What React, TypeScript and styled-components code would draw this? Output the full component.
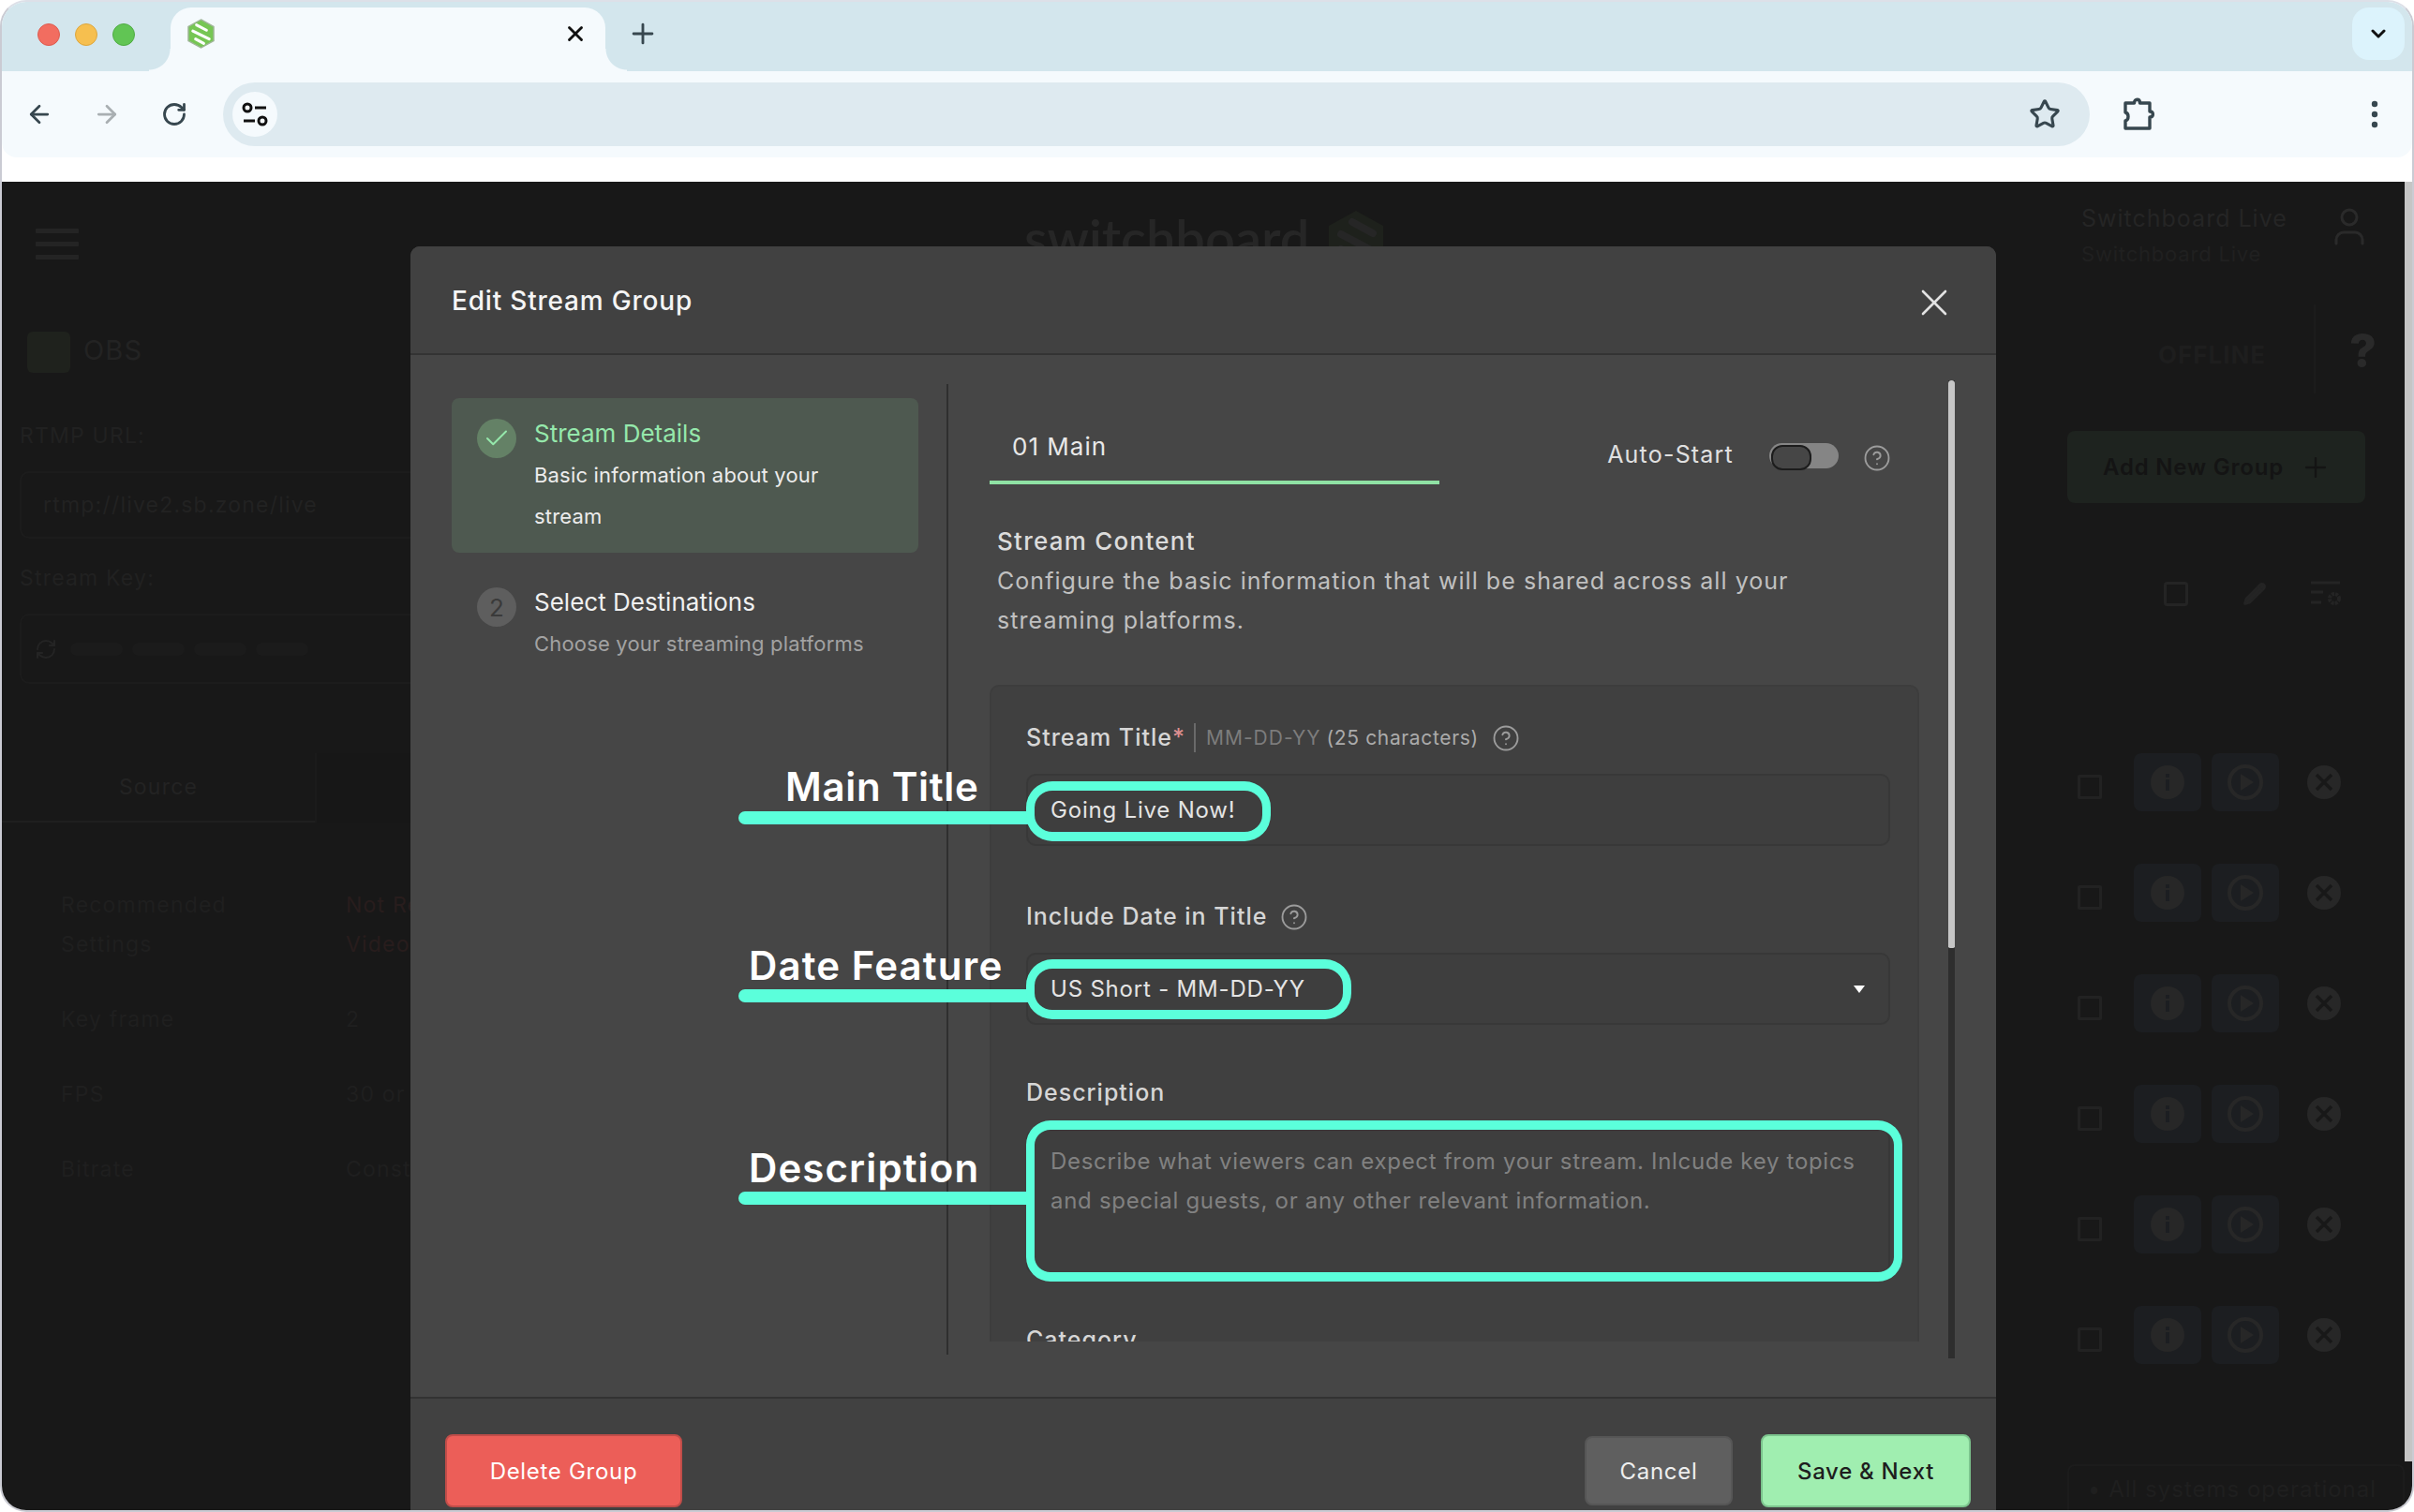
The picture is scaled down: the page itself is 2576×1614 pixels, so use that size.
import React from "react";
import styled, { createGlobalStyle } from "styled-components";
import { ArrowLeft, ArrowRight, RotateCw, Star, X, Plus, ChevronDown, CircleHelp, Check, User, Pencil, RefreshCw } from "lucide-react";

const Global = createGlobalStyle`
  html, body { margin: 0; padding: 0; background: #fff; }
  body { font-family: Inter, "Liberation Sans", sans-serif; }
  * { box-sizing: border-box; }
`;

const Window = styled.div`
  width: 2576px; height: 1614px; display: flex; flex-direction: column; overflow: hidden;
  background: #fff; border: 2px solid #cacbd3; border-top-color: #dde0e8; border-radius: 28px;
`;
const TabStrip = styled.div`
  height: 74px; flex: none; display: flex; background: #d3e6ed; padding: 6px 8px 0 38px;
`;
const Lights = styled.div`
  display: flex; gap: 16px; height: 56px; align-items: center; padding-top: 1px; margin-right: 38px;
`;
const Light = styled.span<{ $c: string; $b: string }>`
  width: 24px; height: 24px; border-radius: 50%; background: ${p => p.$c}; border: 1px solid ${p => p.$b};
`;
const Tab = styled.div`
  position: relative; width: 464px; height: 68px; background: #f5fafd; border-radius: 22px 22px 0 0;
  display: flex; align-items: flex-start; padding: 12px 19px 0 18px; justify-content: space-between;
  &::before, &::after { content: ""; position: absolute; bottom: 0; width: 23px; height: 24px; }
  &::before { left: -23px; background: radial-gradient(circle at 0 0, transparent 22px, #f5fafd 23px); }
  &::after { right: -23px; background: radial-gradient(circle at 100% 0, transparent 22px, #f5fafd 23px); }
`;
const TabClose = styled.span`
  display: flex; color: #111; margin-top: 3px;
`;
const NewTab = styled.span`
  display: flex; color: #37474f; margin: 11px 0 0 23px; height: 34px;
`;
const TabMenu = styled.span`
  margin-left: auto; width: 56px; height: 56px; border-radius: 18px; background: #dcf3fc; color: #111;
  display: flex; align-items: center; justify-content: center;
`;
const Toolbar = styled.div`
  height: 92px; flex: none; display: flex; align-items: center; padding: 0 4px;
  background: #f5fafd; border-radius: 0 0 16px 16px;
`;
const ToolSlot = styled.span<{ $c?: string }>`
  width: 72px; height: 72px; flex: none; display: flex; align-items: center; justify-content: center;
  color: ${p => p.$c || "#37474f"};
`;
const Omnibox = styled.div`
  width: 1992px; height: 68px; flex: none; margin: 0 16px; border-radius: 34px; background: #deeaf0;
  display: flex; align-items: center; justify-content: space-between; padding: 0 31px 0 10px; color: #37474f;
`;
const SiteChip = styled.span`
  width: 48px; height: 48px; border-radius: 50%; background: #f5fafd; display: flex; align-items: center; justify-content: center;
`;
const ToolbarEnd = styled.span`
  margin-left: auto; display: flex;
`;
const ChromeGap = styled.div`
  height: 26px; flex: none; background: #fff;
`;

const Stage = styled.div`
  position: relative; flex: 1; min-height: 0; background: #181818; display: flex; align-items: flex-start;
`;
const PageScrollbar = styled.div`
  width: 8px; height: 1366px; flex: none; background: #c5c5c5;
`;
const Backdrop = styled.div`
  flex: 1; min-width: 0; height: 100%; display: flex; flex-direction: column; overflow: hidden; font-size: 23px; letter-spacing: 1.2px;
`;
const AppHeader = styled.div`
  height: 126px; flex: none; display: flex; padding-left: 36px;
`;
const Hamburger = styled.div`
  display: flex; flex-direction: column; gap: 9px; width: 46px; margin-top: 50px;
  span { height: 5px; background: #242424; border-radius: 1px; }
`;
const LogoWord = styled.div`
  margin: 24px 0 0 1009px; font: 600 56px/72px Lato, sans-serif; color: #262626; width: 310px; letter-spacing: 0;
`;
const LogoMark = styled.div`
  margin: 30px 0 0 14px;
`;
const Account = styled.div`
  margin: 20px 0 0 744px; width: 214px; flex: none; color: #252525; font-size: 25px; line-height: 38px; letter-spacing: 1px; white-space: nowrap;
`;
const AccountSub = styled.div`
  font-size: 22px; line-height: 38px; letter-spacing: 0.8px; color: #202020;
`;
const UserSlot = styled.div`
  color: #2a2a2a; margin: 24px 0 0 48px;
`;
const AppColumns = styled.div`
  flex: 1; min-height: 0; display: flex; justify-content: space-between;
`;
const LeftPane = styled.div`
  width: 560px; flex: none; color: #202020; white-space: nowrap;
`;
const ObsRow = styled.div`
  display: flex; align-items: center; gap: 14px; margin: 34px 0 0 27px; font-size: 29px; color: #232323;
`;
const ObsIcon = styled.span`
  width: 46px; height: 44px; border-radius: 6px; background: #1f221d;
`;
const ObsName = styled.span`
  margin-top: -6px;
`;
const PaneLabel = styled.div<{ $mt: number }>`
  margin: ${p => p.$mt}px 0 0 19px; line-height: 34px; color: #212121;
`;
const PaneInput = styled.div<{ $h: number; $pl: number }>`
  margin: 21px 0 0 19px; height: ${p => p.$h}px; border: 2px solid #1c1c1c; border-radius: 10px; color: #222;
  display: flex; align-items: center; padding-left: ${p => p.$pl}px; gap: 14px;
`;
const KeyMask = styled.span`
  display: flex; gap: 10px; width: 254px;
  i { flex: 1; height: 14px; border-radius: 7px; background: #1b1b1b; }
`;
const PaneTabs = styled.div`
  display: flex; height: 74px; margin-top: 74px;
`;
const PaneTab = styled.div`
  width: 334px; border-bottom: 2px solid #1f1f1f; display: flex; align-items: center; justify-content: center; color: #232323;
`;
const PaneTabIdle = styled.div`
  flex: 1; background: #171717; border-left: 2px solid #1b1b1b;
`;
const SpecGrid = styled.div`
  display: grid; grid-template-columns: 304px 1fr; row-gap: 38px; margin: 67px 0 0 63px; line-height: 42px; color: #1f1f1f;
`;
const SpecDanger = styled.div`
  color: #281d1d;
`;
const RightPane = styled.div`
  width: 360px; flex: none;
`;
const StatusRow = styled.div`
  display: flex; align-items: center; height: 95px; margin-top: 5px; padding-left: 97px;
`;
const Offline = styled.span`
  width: 115px; margin-top: 12px; font-size: 26px; font-weight: 700; color: #1e1e1e; letter-spacing: 1px;
`;
const StatusRule = styled.span`
  width: 2px; height: 95px; background: #1c1c1c; margin: 0 36px 0 51px;
`;
const HelpGlyph = styled.span`
  font-size: 50px; font-weight: 800; color: #2a2a2a; margin-top: 2px; letter-spacing: 0;
`;
const AddButton = styled.div`
  margin-top: 40px; width: 318px; height: 77px; border-radius: 8px; background: #1e231f; color: #141414; font-weight: 600; white-space: nowrap;
  display: flex; align-items: center; justify-content: space-between; padding: 0 36px 0 38px; font-size: 24px; letter-spacing: 0.8px;
`;
const TableTools = styled.div`
  display: flex; align-items: center; margin-top: 84px; height: 26px; padding-left: 103px; gap: 46px; color: #242424;
`;
const ToolSquare = styled.span`
  display: flex; margin-right: 12px;
`;
const StreamRow = styled.div<{ $first?: boolean }>`
  display: flex; align-items: center; height: 62px; margin-top: ${p => (p.$first ? 157 : 56)}px; padding-left: 11px;
`;
const RowCheck = styled.span`
  width: 26px; height: 26px; border: 3px solid #222; border-radius: 2px; margin: 10px 34px 0 0; flex: none;
`;
const RowAction = styled.span`
  width: 72px; height: 62px; border-radius: 8px; background: #1c1e21; margin-right: 11px; display: flex; align-items: center; justify-content: center;
`;
const RowRemove = styled.span`
  display: flex; margin-left: 18px;
`;
const SystemStatus = styled.div`
  margin-top: 107px; height: 60px; border: 2px solid #1c1c1c; border-bottom: 0; border-radius: 8px 8px 0 0;
  padding: 10px 0 0 22px; font-size: 24px; color: #1f1f1f; letter-spacing: 1px; white-space: nowrap;
  &::before { content: "●"; font-size: 10px; margin-right: 10px; vertical-align: middle; }
`;

const Modal = styled.div`
  position: absolute; left: 436px; top: 69px; width: 1692px; height: 1349px; display: flex; flex-direction: column;
  background: #464646; border-radius: 10px 10px 0 0; overflow: hidden; color: #eee;
`;
const ModalHeader = styled.div`
  height: 116px; flex: none; background: #414141; border-bottom: 2px solid #333;
  display: flex; align-items: center; justify-content: space-between; padding: 0 42px 0 44px;
`;
const ModalTitle = styled.h2`
  margin: 1px 0 0; font-size: 28px; font-weight: 500; letter-spacing: 0.8px; color: #f5f5f5;
`;
const CloseSlot = styled.span`
  display: flex; color: #e2e2e2; margin-top: 5px;
`;
const ModalBody = styled.div`
  flex: 1; min-height: 0; display: flex; padding: 31px 0 45px 44px;
`;
const Sidebar = styled.div`
  width: 530px; flex: none; border-right: 2px solid #2f2f2f; padding: 15px 30px 0 0;
  display: flex; flex-direction: column; gap: 15px;
`;
const Step = styled.div<{ $active?: boolean }>`
  display: flex; gap: 19px; padding: 20px 27px 17px; border-radius: 8px; background: ${p => (p.$active ? "#4e5950" : "transparent")};
`;
const StepBadge = styled.span<{ $active?: boolean }>`
  width: 42px; height: 42px; margin-top: 2px; flex: none; border-radius: 50%; background: ${p => (p.$active ? "#648166" : "#5e5e5e")};
  color: ${p => (p.$active ? "#95e8ab" : "#3a3a3a")}; display: flex; align-items: center; justify-content: center; font-size: 26px;
`;
const StepText = styled.div`
  min-width: 0;
`;
const StepTitle = styled.div<{ $active?: boolean }>`
  font-size: 26px; line-height: 36px; color: ${p => (p.$active ? "#95e8ab" : "#f0f0f0")};
`;
const StepDesc = styled.div<{ $muted?: boolean }>`
  margin-top: 4px; max-width: 360px; font-size: 22px; line-height: 44px; letter-spacing: 0.18px; color: ${p => (p.$muted ? "#a2a2a2" : "#ececec")};
`;
const MainColumn = styled.div`
  flex: 1; min-width: 0; display: flex;
`;
const ScrollContent = styled.div`
  width: 1067px; flex: none; padding: 0 31px 0 44px; margin-bottom: 14px; overflow: hidden;
`;
const TabRow = styled.div`
  display: flex; justify-content: space-between; padding-right: 30px;
`;
const GroupTab = styled.div`
  width: 480px; height: 107px; border-bottom: 4px solid #8fe2a4; padding: 50px 0 0 24px; font-size: 26px; line-height: 34px; letter-spacing: 1px; color: #e8e8e8;
`;
const AutoStart = styled.div`
  display: flex; align-items: center; gap: 38px; height: 34px; margin-top: 58px; font-size: 25px; letter-spacing: 1.2px; color: #e0e0e0;
`;
const Toggle = styled.span`
  width: 74px; height: 27px; border-radius: 14px; background: #858585; margin-top: 3px; padding: 2px; display: flex;
  &::before { content: ""; width: 39px; height: 23px; border-radius: 12px; background: #464646; border: 2px solid #1c1c1c; }
`;
const HelpSlot = styled.span<{ $ml?: number; $mt?: number }>`
  display: flex; color: #9c9c9c; margin-left: ${p => p.$ml ?? 0}px; margin-top: ${p => p.$mt ?? 0}px;
`;
const AutoHelp = styled(HelpSlot)`
  margin-left: -12px;
`;
const SectionHead = styled.div`
  margin: 40px 0 0 8px;
`;
const SectionTitle = styled.div`
  font-size: 26px; font-weight: 500; line-height: 42px; letter-spacing: 1.25px; color: #dcdcdc;
`;
const SectionText = styled.div`
  font-size: 25px; line-height: 42px; letter-spacing: 1.05px; color: #c0c0c0; width: 900px;
`;
const FormCard = styled.div`
  margin-top: 48px; padding: 37px 29px 0 37px; min-height: 760px; border: 2px solid #3d3d3d; border-radius: 10px; background: #404040;
`;
const FieldLabel = styled.div<{ $mt?: number }>`
  display: flex; align-items: center; height: 34px; margin-top: ${p => p.$mt ?? 0}px; font-size: 25px; font-weight: 500; letter-spacing: 1px; color: #d6d6d6;
`;
const Required = styled.span`
  color: #dc8f8f;
`;
const LabelRule = styled.span`
  width: 2px; height: 31px; background: #6a6a6a; margin: 0 11px 0 9px;
`;
const LabelFormat = styled.span`
  font-size: 21px; color: #7c7c7c; margin-right: 6px; font-weight: 400;
`;
const LabelHint = styled.span`
  font-size: 21px; color: #ababab; font-weight: 400; letter-spacing: 0.65px;
`;
const FieldBox = styled.div<{ $h: number }>`
  margin-top: 22px; height: ${p => p.$h}px; border: 2px solid #383838; border-radius: 10px; background: #3e3e3e; padding: 0 25px 0 24px;
  display: flex; align-items: center; justify-content: space-between; font-size: 24px; letter-spacing: 0.8px; color: #e4e4e4;
`;
const Caret = styled.span`
  width: 0; height: 0; border-left: 6px solid transparent; border-right: 6px solid transparent; border-top: 8px solid #fff;
`;
const Placeholder = styled.div`
  align-self: flex-start; padding-top: 12px; line-height: 42px; letter-spacing: 0.7px; color: #818181;
`;
const Scrollbar = styled.div`
  width: 7px; flex: none; margin: -4px 0 -4px; background: #2e2e2e;
  &::before { content: ""; display: block; height: 606px; background: #c6c6c6; border-radius: 4px 4px 2px 2px; }
`;
const ModalFooter = styled.div`
  height: 121px; flex: none; background: #414141; border-top: 2px solid #333; display: flex; align-items: flex-start; padding: 38px 27px 0 37px; justify-content: space-between;
`;
const FooterGroup = styled.div`
  display: flex; align-items: center; gap: 30px;
`;
const FooterButton = styled.button<{ $bg: string; $bd: string; $fg: string; $w: number; $h: number; $weight?: number }>`
  width: ${p => p.$w}px; height: ${p => p.$h}px; border-radius: 8px; border: 2px solid ${p => p.$bd}; background: ${p => p.$bg}; color: ${p => p.$fg};
  font: ${p => p.$weight ?? 400} 24px Inter, sans-serif; letter-spacing: 0.7px;
`;
const CalloutRing = styled.div<{ $x: number; $y: number; $w: number; $h: number; $r: number }>`
  position: absolute; left: ${p => p.$x}px; top: ${p => p.$y}px; width: ${p => p.$w}px; height: ${p => p.$h}px;
  border: 10px solid #5bffdb; border-left-width: 9px; border-right-width: 9px; border-radius: ${p => p.$r}px;
`;
const CalloutLine = styled.div<{ $y: number }>`
  position: absolute; left: 350px; top: ${p => p.$y}px; width: 312px; height: 14px; border-radius: 7px 0 0 7px; background: #5bffdb;
`;
const CalloutLabel = styled.div<{ $x: number; $y: number; $ls?: number }>`
  position: absolute; left: ${p => p.$x}px; top: ${p => p.$y}px; font-size: 42px; line-height: 48px; font-weight: 600; letter-spacing: ${p => p.$ls ?? 1.1}px; color: #fff; white-space: nowrap;
`;

const Favicon = () => (
  <svg width="29" height="32" viewBox="0 0 30 34" fill="none" preserveAspectRatio="none">
    <path d="M15 1 29 9v16l-14 8-14-8V9z" fill="#76c654" stroke="#9fb598" strokeWidth="1.5" />
    <path d="M10 7l11 6M6 14l18 9M9 23l9 5" stroke="#fff" strokeWidth="3.2" strokeLinecap="round" />
  </svg>
);
const SiteIcon = () => (
  <svg width="28" height="26" viewBox="0 0 28 26" fill="none" stroke="#111" strokeWidth="3">
    <circle cx="6" cy="6" r="4" />
    <path d="M14 6h12M2 20h12" />
    <circle cx="22" cy="20" r="4" />
  </svg>
);
const PuzzleIcon = () => (
  <svg width="36" height="36" viewBox="0 0 36 36" fill="none" stroke="#37474f" strokeWidth="3.4" strokeLinejoin="round">
    <path d="M4 6h9.5c0-5 6-5 6 0H30v9c4.5 0 4.5 6 0 6v12H4v-8c4-1 4-8 0-9z" />
  </svg>
);
const KebabIcon = () => (
  <svg width="8" height="30" viewBox="0 0 8 30" fill="#37474f">
    <circle cx="4" cy="4" r="3.2" />
    <circle cx="4" cy="15" r="3.2" />
    <circle cx="4" cy="26" r="3.2" />
  </svg>
);
const LogoHex = () => (
  <svg width="60" height="68" viewBox="0 0 60 68" fill="none">
    <path d="M30 1 59 17v34L30 67 1 51V17z" fill="#1e211c" />
    <path d="M26 13l22 12M14 26l34 18M14 42l20 11" stroke="#262626" strokeWidth="8" strokeLinecap="round" />
  </svg>
);
const InfoIcon = () => (
  <svg width="38" height="38" viewBox="0 0 38 38">
    <circle cx="19" cy="19" r="18" fill="#272727" />
    <rect x="17" y="16" width="4" height="12" fill="#1c1e21" />
    <rect x="17" y="10" width="4" height="4" fill="#1c1e21" />
  </svg>
);
const PlayIcon = () => (
  <svg width="38" height="38" viewBox="0 0 38 38" fill="none">
    <circle cx="19" cy="19" r="17" stroke="#272727" strokeWidth="4" />
    <path d="M14 10l14 9-14 9z" fill="#272727" />
  </svg>
);
const RemoveIcon = () => (
  <svg width="38" height="38" viewBox="0 0 38 38" fill="none">
    <circle cx="19" cy="19" r="18" fill="#272727" />
    <path d="M11 11l16 16M27 11 11 27" stroke="#181818" strokeWidth="3.5" />
  </svg>
);
const SquareIcon = () => (
  <svg width="26" height="26" viewBox="0 0 26 26" fill="none" stroke="#242424" strokeWidth="3">
    <rect x="1.5" y="1.5" width="23" height="23" rx="2" />
  </svg>
);
const FilterGearIcon = () => (
  <svg width="34" height="28" viewBox="0 0 34 28" fill="none">
    <path d="M1 2h31M1 12h13M1 23h11" stroke="#242424" strokeWidth="3" />
    <circle cx="26" cy="19" r="5" stroke="#242424" strokeWidth="4" strokeDasharray="3 1" />
  </svg>
);

const rows = [0, 1, 2, 3, 4, 5];

export default function App() {
  return (
    <>
      <Global />
      <Window>
        <TabStrip>
          <Lights>
            <Light $c="#f26d60" $b="#dc5c50" />
            <Light $c="#f6bf4f" $b="#dca63e" />
            <Light $c="#61c554" $b="#50ab45" />
          </Lights>
          <Tab>
            <Favicon />
            <TabClose><X size={26} strokeWidth={2.6} /></TabClose>
          </Tab>
          <NewTab><Plus size={34} strokeWidth={2} /></NewTab>
          <TabMenu><ChevronDown size={24} strokeWidth={3} /></TabMenu>
        </TabStrip>
        <Toolbar>
          <ToolSlot><ArrowLeft size={30} strokeWidth={2.2} /></ToolSlot>
          <ToolSlot $c="#a9afb2"><ArrowRight size={30} strokeWidth={2.2} /></ToolSlot>
          <ToolSlot><RotateCw size={28} strokeWidth={2.4} /></ToolSlot>
          <Omnibox>
            <SiteChip><SiteIcon /></SiteChip>
            <Star size={34} strokeWidth={2.2} />
          </Omnibox>
          <ToolSlot><PuzzleIcon /></ToolSlot>
          <ToolbarEnd><ToolSlot><KebabIcon /></ToolSlot></ToolbarEnd>
        </Toolbar>
        <ChromeGap />
        <Stage>
          <Backdrop>
            <AppHeader>
              <Hamburger><span /><span /><span /></Hamburger>
              <LogoWord>switchboard</LogoWord>
              <LogoMark><LogoHex /></LogoMark>
              <Account>
                Switchboard Live
                <AccountSub>Switchboard Live</AccountSub>
              </Account>
              <UserSlot><User size={48} strokeWidth={1.5} /></UserSlot>
            </AppHeader>
            <AppColumns>
              <LeftPane>
                <ObsRow><ObsIcon /><ObsName>OBS</ObsName></ObsRow>
                <PaneLabel $mt={50}>RTMP URL:</PaneLabel>
                <PaneInput $h={72} $pl={23}>rtmp://live2.sb.zone/live</PaneInput>
                <PaneLabel $mt={25}>Stream Key:</PaneLabel>
                <PaneInput $h={75} $pl={14}><RefreshCw size={24} color="#242424" /><KeyMask><i /><i /><i /><i /></KeyMask></PaneInput>
                <PaneTabs>
                  <PaneTab>Source</PaneTab>
                  <PaneTabIdle />
                </PaneTabs>
                <SpecGrid>
                  <div>Recommended<br />Settings</div>
                  <SpecDanger>Not Recommended<br />Video...</SpecDanger>
                  <div>Key frame</div>
                  <div>2</div>
                  <div>FPS</div>
                  <div>30 or 60</div>
                  <div>Bitrate</div>
                  <div>Constant</div>
                </SpecGrid>
              </LeftPane>
              <RightPane>
                <StatusRow>
                  <Offline>OFFLINE</Offline>
                  <StatusRule />
                  <HelpGlyph>?</HelpGlyph>
                </StatusRow>
                <AddButton>Add New Group<Plus size={34} strokeWidth={1.6} color="#141414" /></AddButton>
                <TableTools>
                  <ToolSquare><SquareIcon /></ToolSquare>
                  <Pencil size={26} fill="#242424" />
                  <FilterGearIcon />
                </TableTools>
                {rows.map(r => (
                  <StreamRow key={r} $first={r === 0}>
                    <RowCheck />
                    <RowAction><InfoIcon /></RowAction>
                    <RowAction><PlayIcon /></RowAction>
                    <RowRemove><RemoveIcon /></RowRemove>
                  </StreamRow>
                ))}
                <SystemStatus>All systems operational</SystemStatus>
              </RightPane>
            </AppColumns>
          </Backdrop>
          <PageScrollbar />
          <Modal>
            <ModalHeader>
              <ModalTitle>Edit Stream Group</ModalTitle>
              <CloseSlot><X size={48} strokeWidth={1.3} /></CloseSlot>
            </ModalHeader>
            <ModalBody>
              <Sidebar>
                <Step $active>
                  <StepBadge $active><Check size={30} strokeWidth={1.6} /></StepBadge>
                  <StepText>
                    <StepTitle $active>Stream Details</StepTitle>
                    <StepDesc>Basic information about your stream</StepDesc>
                  </StepText>
                </Step>
                <Step>
                  <StepBadge>2</StepBadge>
                  <StepText>
                    <StepTitle>Select Destinations</StepTitle>
                    <StepDesc $muted>Choose your streaming platforms</StepDesc>
                  </StepText>
                </Step>
              </Sidebar>
              <MainColumn>
                <ScrollContent>
                  <TabRow>
                    <GroupTab>01 Main</GroupTab>
                    <AutoStart>
                      Auto-Start
                      <Toggle />
                      <AutoHelp $mt={8}><CircleHelp size={30} strokeWidth={1.5} /></AutoHelp>
                    </AutoStart>
                  </TabRow>
                  <SectionHead>
                    <SectionTitle>Stream Content</SectionTitle>
                    <SectionText>Configure the basic information that will be shared across all your streaming platforms.</SectionText>
                  </SectionHead>
                  <FormCard>
                    <FieldLabel>
                      Stream Title<Required>*</Required>
                      <LabelRule />
                      <LabelFormat>MM-DD-YY</LabelFormat>
                      <LabelHint>(25 characters)</LabelHint>
                      <HelpSlot $ml={14} $mt={2}><CircleHelp size={30} strokeWidth={1.5} /></HelpSlot>
                    </FieldLabel>
                    <FieldBox $h={77}>Going Live Now!</FieldBox>
                    <FieldLabel $mt={58}>
                      Include Date in Title
                      <HelpSlot $ml={14} $mt={2}><CircleHelp size={30} strokeWidth={1.5} /></HelpSlot>
                    </FieldLabel>
                    <FieldBox $h={77}>US Short - MM-DD-YY<Caret /></FieldBox>
                    <FieldLabel $mt={55}>Description</FieldLabel>
                    <FieldBox $h={155}>
                      <Placeholder>Describe what viewers can expect from your stream. Inlcude key topics and special guests, or any other relevant information.</Placeholder>
                    </FieldBox>
                    <FieldLabel $mt={53}>Category</FieldLabel>
                  </FormCard>
                </ScrollContent>
                <Scrollbar />
              </MainColumn>
            </ModalBody>
            <ModalFooter>
              <FooterButton $bg="#ec5e58" $bd="#c04d49" $fg="#fff" $w={253} $h={78}>Delete Group</FooterButton>
              <FooterGroup>
                <FooterButton $bg="#5f5f5f" $bd="#565656" $fg="#eee" $w={158} $h={74}>Cancel</FooterButton>
                <FooterButton $bg="#a0eeb0" $bd="#7cc58e" $fg="#1e1e1e" $w={224} $h={78} $weight={500}>Save &amp; Next</FooterButton>
              </FooterGroup>
            </ModalFooter>
            <CalloutLabel $x={400} $y={553} $ls={0.7}>Main Title</CalloutLabel>
            <CalloutLine $y={603} />
            <CalloutRing $x={657} $y={571} $w={261} $h={64} $r={28} />
            <CalloutLabel $x={361} $y={744}>Date Feature</CalloutLabel>
            <CalloutLine $y={793} />
            <CalloutRing $x={657} $y={761} $w={347} $h={64} $r={28} />
            <CalloutLabel $x={361} $y={960}>Description</CalloutLabel>
            <CalloutLine $y={1009} />
            <CalloutRing $x={657} $y={933} $w={935} $h={172} $r={26} />
          </Modal>
        </Stage>
      </Window>
    </>
  );
}
